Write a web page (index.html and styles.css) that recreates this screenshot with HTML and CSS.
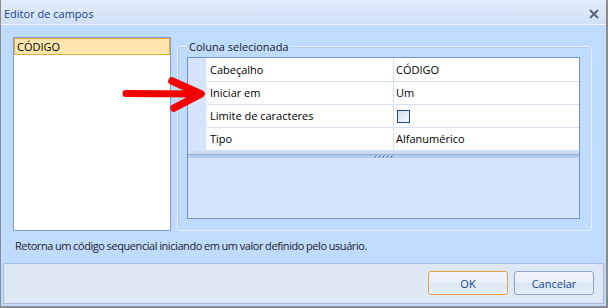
FILE: index.html
```html
<!DOCTYPE html>
<html>
<head>
<meta charset="utf-8">
<link rel="stylesheet" href="styles.css">
</head>
<body>
<div class="window">
  <div class="titlebar">
    <span class="title">Editor de campos</span>
    <svg class="close" width="10" height="10" viewBox="0 0 10 10">
      <path d="M1 1 L9 9 M9 1 L1 9" stroke="#56667e" stroke-width="1.9" fill="none"/>
    </svg>
  </div>
  <div class="main">
    <div class="list">
      <div class="item selected">CÓDIGO</div>
    </div>
    <div class="group">
      <div class="legend">Coluna selecionada</div>
      <div class="grid">
        <div class="rows">
          <div class="rh-col"></div>
          <div class="table">
            <div class="row"><div class="name">Cabeçalho</div><div class="val">CÓDIGO</div></div>
            <div class="row"><div class="name">Iniciar em</div><div class="val">Um</div></div>
            <div class="row"><div class="name">Limite de caracteres</div><div class="val"><span class="check"></span></div></div>
            <div class="row"><div class="name">Tipo</div><div class="val">Alfanumérico</div></div>
          </div>
        </div>
        <div class="splitter">
          <svg class="grip" width="20" height="3" viewBox="0 0 20 3">
            <path d="M0.5 2.5 L2.5 0.5 M4.5 2.5 L6.5 0.5 M8.5 2.5 L10.5 0.5 M12.5 2.5 L14.5 0.5 M16.5 2.5 L18.5 0.5" stroke="#2f5fa6" stroke-width="1" fill="none"/>
          </svg>
        </div>
        <div class="desc-area"></div>
      </div>
    </div>
  </div>
  <div class="hint">Retorna um código sequencial iniciando em um valor definido pelo usuário.</div>
  <div class="footer">
    <button class="btn btn-ok">OK</button>
    <button class="btn">Cancelar</button>
  </div>
  <svg class="arrow" width="608" height="308" viewBox="0 0 608 308">
    <path d="M126 93.5 L199 94" stroke="#f40000" stroke-width="7" stroke-linecap="round" fill="none"/>
    <path d="M172 81 L201 94 L174 108" stroke="#f40000" stroke-width="7.5" stroke-linecap="round" stroke-linejoin="round" fill="none"/>
  </svg>
</div>
</body>
</html>
```
FILE: styles.css
```css
body {
  margin: 0;
}

.window {
  position: relative;
  width: 608px;
  height: 308px;
  box-sizing: border-box;
  border-left: 1px solid #8b8b8b;
  border-right: 2px solid #8b8b8b;
  border-bottom: 2px solid #8b8b8b;
  background: #bfdbff;
  font-family: "Open Sans", "Noto Sans", sans-serif;
  font-size: 11px;
  color: #1a1a1a;
  display: flex;
  flex-direction: column;
}

.titlebar {
  height: 25px;
  box-sizing: border-box;
  border-bottom: 1px solid #f3f7fd;
  background: linear-gradient(#e3edfa, #d0e0f6);
  display: flex;
  align-items: flex-start;
  justify-content: space-between;
  padding: 6px 0 0 3px;
}

.title {
  line-height: 15px;
  color: #15428b;
}

.close {
  margin: 3px 7px 0 0;
}

.main {
  display: flex;
  align-items: flex-start;
  gap: 6px;
  padding: 12px 14px 0 12px;
}

.list {
  width: 158px;
  height: 194px;
  box-sizing: border-box;
  border: 1px solid #7f9dcb;
  background: #fff;
}

.item {
  height: 17px;
  box-sizing: border-box;
  padding-left: 2px;
  line-height: 15px;
  color: #000;
}

.item.selected {
  border: 1px solid #f0a746;
  background: #ffe6ae;
}

.group {
  width: 415px;
  height: 185px;
  box-sizing: border-box;
  margin-top: 9px;
  border: 1px solid #e6f0fd;
  border-radius: 3px;
  box-shadow: inset 1px 1px 0 #b3cced;
}

.legend {
  width: max-content;
  margin: -8px 0 0 9px;
  padding: 0 2px;
  line-height: 15px;
  background: #bfdbff;
  color: #1a1a1a;
}

.grid {
  width: 393px;
  height: 162px;
  box-sizing: border-box;
  margin: 3px 0 0 9px;
  border: 1px solid #7094c9;
  background: #d4e5fb;
  display: flex;
  flex-direction: column;
}

.rows {
  display: flex;
  background: #fff;
}

.rh-col {
  width: 19px;
  box-sizing: border-box;
  background: #d5e4fa;
  border-right: 1px solid #eef4fd;
}

.table {
  flex: 1;
  padding-top: 1px;
}

.row {
  display: flex;
  height: 23px;
  box-sizing: border-box;
  border-bottom: 1px solid #d5e1f2;
  line-height: 22px;
  color: #000;
}

.name {
  width: 187px;
  box-sizing: border-box;
  border-right: 1px solid #d5e1f2;
  padding-left: 3px;
}

.val {
  flex: 1;
  padding-left: 2px;
  display: flex;
  align-items: center;
}

.check {
  width: 13px;
  height: 13px;
  box-sizing: border-box;
  margin-left: 1px;
  border: 1px solid #1c4a84;
  background: linear-gradient(135deg, #d2dbec, #fbfcfe);
}

.splitter {
  height: 7px;
  background: linear-gradient(#cbdcf4 0 3px, #93b0dc 3px 4px, #b4cbed 4px);
  display: flex;
  justify-content: center;
}

.grip {
  margin-top: 4px;
  display: block;
}

.desc-area {
  flex: 1;
  background: #d4e5fb;
}

.hint {
  padding: 7px 0 0 14px;
  line-height: 15px;
  color: #1e1e1e;
  letter-spacing: -0.42px;
  word-spacing: -0.4px;
}

.footer {
  margin: 10px 2px 0 2px;
  height: 41px;
  box-sizing: border-box;
  border: 1px solid #a4bad8;
  background: #dfe9f6;
  display: flex;
  justify-content: flex-end;
  align-items: flex-start;
  gap: 6px;
  padding: 7px 9px 0 0;
}

.btn {
  width: 80px;
  height: 24px;
  box-sizing: border-box;
  border: 1px solid #8aa3c6;
  border-radius: 3px;
  background: linear-gradient(#f1f5fc 0%, #e8eff9 50%, #dae6f6 51%, #e7eff9 100%);
  color: #15428b;
  font-family: inherit;
  font-size: 11px;
  line-height: 15px;
  padding: 0;
}

.btn-ok {
  border-color: #efa047;
}

.arrow {
  position: absolute;
  left: -1px;
  top: 0;
  pointer-events: none;
}
```
